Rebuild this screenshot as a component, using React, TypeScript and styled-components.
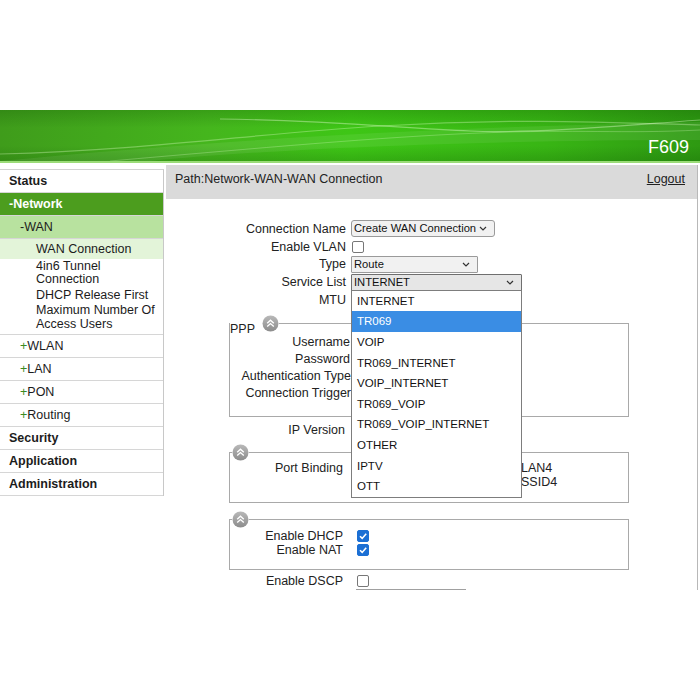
import React from 'react'
import styled, {createGlobalStyle} from 'styled-components'

const GlobalStyle = createGlobalStyle`
  html, body {
    margin: 0;
    padding: 0;
    background: #fff;
  }
  body {
    font-family: "Liberation Sans", Arial, sans-serif;
    font-size: 12.5px;
    color: #222;
  }
`

const Page = styled.div`
  width: 700px;
  height: 590px;
  overflow: hidden;
  padding-top: 110px;
  box-sizing: border-box;
`

/* ---------- banner ---------- */

const Banner = styled.div`
  height: 51px;
  display: grid;
  border-bottom: 2px solid #9bdc78;
  & > * {
    grid-area: 1 / 1;
  }
`

const BannerArt = styled.svg`
  width: 100%;
  height: 100%;
  display: block;
`

const ModelName = styled.div`
  align-self: end;
  justify-self: end;
  padding: 0 11px 5px 0;
  color: #fff;
  font-size: 18px;
  line-height: 18px;
`

/* ---------- body ---------- */

const Body = styled.div`
  display: flex;
  align-items: flex-start;
  margin-top: 2px;
  height: 440px;
`

const Sidebar = styled.ul`
  list-style: none;
  margin: 4px 0 0;
  padding: 0;
  width: 164px;
  box-sizing: border-box;
  border-top: 1px solid #d2d2d2;
  border-right: 1px solid #c8c8c8;
  flex-shrink: 0;
`

type Tone = 'plain' | 'dark' | 'mid' | 'light'

const toneBg: Record<Tone, string> = {
  plain: '#fff',
  dark: '#4c9d1e',
  mid: '#b8e29f',
  light: '#e3f4d9',
}

const NavRow = styled.li<{$tone?: Tone; $indent: number; $bold?: boolean}>`
  height: 22px;
  line-height: 22px;
  border-bottom: 1px solid #d6d6d6;
  padding-left: ${(p) => p.$indent}px;
  background: ${(p) => toneBg[p.$tone ?? 'plain']};
  color: ${(p) => (p.$tone === 'dark' ? '#fff' : '#1c1c1c')};
  font-weight: ${(p) => (p.$bold ? 'bold' : 'normal')};
  white-space: nowrap;
`

const Plus = styled.span`
  color: #3a8a20;
`

const LeafGroup = styled.li`
  border-bottom: 1px solid #d6d6d6;
  padding-bottom: 1.5px;
`

const Leaf = styled.div<{$active?: boolean}>`
  padding: ${(p) => (p.$active ? '3.5px' : '1px')} 8px
    ${(p) => (p.$active ? '2.5px' : '1px')} 36px;
  line-height: 13.5px;
  background: ${(p) => (p.$active ? toneBg.light : 'transparent')};
  color: #1c1c1c;
`

const Main = styled.div`
  flex: 1;
  margin: 0 2px 0 2px;
  align-self: stretch;
  border-right: 1px solid #b8b8b8;
`

const PathBar = styled.div`
  height: 34px;
  box-sizing: border-box;
  background: #dadada;
  display: flex;
  justify-content: space-between;
  align-items: flex-start;
  padding: 7px 12px 0 9px;
  line-height: 15px;
`

const Logout = styled.a`
  color: #222;
  text-decoration: underline;
`

const Form = styled.div`
  padding-top: 21px;
`

const Row = styled.div<{$h: number; $top?: number; $align?: string}>`
  display: flex;
  align-items: ${(p) => p.$align ?? 'center'};
  height: ${(p) => p.$h}px;
  margin-top: ${(p) => p.$top ?? 0}px;
`

const Label = styled.div<{$w: number; $gap?: number}>`
  width: ${(p) => p.$w}px;
  margin-right: ${(p) => p.$gap ?? 5}px;
  text-align: right;
  white-space: nowrap;
  flex-shrink: 0;
  line-height: 14px;
`

const SelectBox = styled.div<{$w: number; $round?: boolean; $active?: boolean}>`
  width: ${(p) => p.$w}px;
  height: 17px;
  box-sizing: border-box;
  border: 1px solid ${(p) => (p.$active ? '#6f6f6f' : '#9a9a9a')};
  border-radius: ${(p) => (p.$round ? 3 : 1)}px;
  background: ${(p) => (p.$active ? '#e6e6e6' : '#f1f1f1')};
  display: flex;
  align-items: center;
  justify-content: space-between;
  padding: 0 7px 0 2px;
  font-size: 11.2px;
  line-height: 15px;
  white-space: nowrap;
  color: #111;
  position: relative;
`

const Box = styled.span<{$checked?: boolean; $left?: number}>`
  display: inline-flex;
  align-items: center;
  justify-content: center;
  width: 12px;
  height: 12px;
  box-sizing: border-box;
  margin-left: ${(p) => p.$left ?? 1}px;
  border: 1px solid ${(p) => (p.$checked ? '#1b6fd4' : '#777')};
  border-radius: 2px;
  background: ${(p) => (p.$checked ? '#1b6fd4' : '#fff')};
  flex-shrink: 0;
`

const Field = styled.fieldset<{$top: number; $bottom?: number}>`
  margin: ${(p) => p.$top}px 0 0 63px;
  width: 400px;
  box-sizing: border-box;
  border: 1px solid #a9a9a9;
  padding: 0 0 ${(p) => p.$bottom ?? 13}px 0;
  min-width: 0;
`

const Legend = styled.legend<{$left?: number}>`
  padding: 0;
  margin-left: ${(p) => p.$left ?? 0}px;
  display: flex;
  align-items: flex-end;
  height: 17px;
`

const LegendText = styled.span`
  line-height: 12px;
  margin-bottom: -3px;
  margin-right: 7px;
`

const Options = styled.ul`
  position: absolute;
  top: 100%;
  left: -1px;
  width: 171px;
  box-sizing: border-box;
  margin: 0;
  padding: 0;
  list-style: none;
  background: #fff;
  border: 1px solid #7d7d7d;
  z-index: 5;
  font-size: 11.5px;
`

const Option = styled.li<{$hover?: boolean}>`
  height: 20.6px;
  line-height: 21px;
  padding-left: 5px;
  background: ${(p) => (p.$hover ? '#3a8de4' : 'transparent')};
  color: ${(p) => (p.$hover ? '#fff' : '#111')};
`

const Ports = styled.div`
  display: flex;
  flex-direction: column;
  line-height: 14px;
`

const PortLine = styled.div`
  display: flex;
`

const Port = styled.span`
  display: inline-flex;
  align-items: center;
  width: 52px;
  gap: 1px;
`

const TextInput = styled.div<{$w: number; $left?: number}>`
  width: ${(p) => p.$w}px;
  height: 17px;
  box-sizing: border-box;
  border: 1px solid #a0a0a0;
  margin-left: ${(p) => p.$left ?? 0}px;
  background: #fff;
`

/* ---------- drawings ---------- */

const Chevron = () => (
  <svg width="8" height="5" viewBox="0 0 8 5">
    <path d="M1 1 L4 4 L7 1" fill="none" stroke="#333" strokeWidth="1.2" />
  </svg>
)

const Check = () => (
  <svg width="10" height="10" viewBox="0 0 10 10">
    <path
      d="M2 5.2 L4.2 7.4 L8.2 2.8"
      fill="none"
      stroke="#fff"
      strokeWidth="1.6"
    />
  </svg>
)

const CollapseIcon = () => (
  <svg width="17" height="17" viewBox="0 0 17 17">
    <defs>
      <linearGradient id="cg" x1="0" y1="0" x2="0" y2="1">
        <stop offset="0" stopColor="#b9b9b9" />
        <stop offset="1" stopColor="#8c8c8c" />
      </linearGradient>
    </defs>
    <circle cx="8.5" cy="8.5" r="8" fill="url(#cg)" />
    <path
      d="M5.2 8.2 L8.5 5.2 L11.8 8.2 M5.2 11.6 L8.5 8.6 L11.8 11.6"
      fill="none"
      stroke="#fff"
      strokeWidth="1.4"
    />
  </svg>
)

const Waves = () => (
  <BannerArt viewBox="0 0 700 51" preserveAspectRatio="none">
    <defs>
      <linearGradient id="bh" x1="0" y1="0" x2="1" y2="0">
        <stop offset="0" stopColor="#3f9c1b" />
        <stop offset="0.3" stopColor="#45b61d" />
        <stop offset="0.5" stopColor="#3ec616" />
        <stop offset="0.78" stopColor="#38b514" />
        <stop offset="1" stopColor="#2e9912" />
      </linearGradient>
      <linearGradient id="bv" x1="0" y1="0" x2="0" y2="1">
        <stop offset="0" stopColor="#0a4a00" stopOpacity="0.22" />
        <stop offset="0.35" stopColor="#0a4a00" stopOpacity="0" />
        <stop offset="0.7" stopColor="#0a4a00" stopOpacity="0" />
        <stop offset="1" stopColor="#0a4a00" stopOpacity="0.2" />
      </linearGradient>
    </defs>
    <rect width="700" height="51" fill="url(#bh)" />
    <rect width="700" height="51" fill="url(#bv)" />
    <path
      d="M0 51 C 200 32, 400 18, 700 12 L700 30 C 460 30, 260 40, 150 51 Z"
      fill="#ffffff"
      opacity="0.07"
    />
    <path
      d="M0 44 C 150 40, 250 24, 380 16 S 600 12, 700 15"
      fill="none"
      stroke="#dfffc8"
      strokeOpacity="0.35"
      strokeWidth="1.2"
    />
    <path
      d="M110 51 C 260 38, 380 27, 480 23 S 620 24, 700 20"
      fill="none"
      stroke="#dfffc8"
      strokeOpacity="0.28"
      strokeWidth="1"
    />
    <path
      d="M220 9 C 320 10, 400 18, 470 21 S 640 14, 700 10"
      fill="none"
      stroke="#e8ffd8"
      strokeOpacity="0.4"
      strokeWidth="1.2"
    />
  </BannerArt>
)

const services = [
  'INTERNET',
  'TR069',
  'VOIP',
  'TR069_INTERNET',
  'VOIP_INTERNET',
  'TR069_VOIP',
  'TR069_VOIP_INTERNET',
  'OTHER',
  'IPTV',
  'OTT',
]

const App: React.FC = () => {
  return (
    <Page>
      <GlobalStyle />
      <Banner>
        <Waves />
        <ModelName>F609</ModelName>
      </Banner>

      <Body>
        <Sidebar>
          <NavRow $indent={9} $bold>
            Status
          </NavRow>
          <NavRow $indent={9} $bold $tone="dark">
            -Network
          </NavRow>
          <NavRow $indent={20} $tone="mid">
            -WAN
          </NavRow>
          <LeafGroup>
            <Leaf $active>WAN Connection</Leaf>
            <Leaf>
              4in6 Tunnel
              <br />
              Connection
            </Leaf>
            <Leaf>DHCP Release First</Leaf>
            <Leaf>
              Maximum Number Of
              <br />
              Access Users
            </Leaf>
          </LeafGroup>
          {['WLAN', 'LAN', 'PON', 'Routing'].map((name) => (
            <NavRow key={name} $indent={20}>
              <Plus>+</Plus>
              {name}
            </NavRow>
          ))}
          <NavRow $indent={9} $bold>
            Security
          </NavRow>
          <NavRow $indent={9} $bold>
            Application
          </NavRow>
          <NavRow $indent={9} $bold>
            Administration
          </NavRow>
        </Sidebar>

        <Main>
          <PathBar>
            <span>Path:Network-WAN-WAN Connection</span>
            <Logout>Logout</Logout>
          </PathBar>

          <Form>
            <Row $h={17.8}>
              <Label $w={180}>Connection Name</Label>
              <SelectBox $w={144} $round>
                <span>Create WAN Connection</span>
                <Chevron />
              </SelectBox>
            </Row>
            <Row $h={17.8}>
              <Label $w={180}>Enable VLAN</Label>
              <Box />
            </Row>
            <Row $h={17.8}>
              <Label $w={180}>Type</Label>
              <SelectBox $w={127}>
                <span>Route</span>
                <Chevron />
              </SelectBox>
            </Row>
            <Row $h={17.8}>
              <Label $w={180}>Service List</Label>
              <SelectBox $w={171} $active>
                <span>INTERNET</span>
                <Chevron />
                <Options>
                  {services.map((s) => (
                    <Option key={s} $hover={s === 'TR069'}>
                      {s}
                    </Option>
                  ))}
                </Options>
              </SelectBox>
            </Row>
            <Row $h={17.8}>
              <Label $w={180}>MTU</Label>
              <TextInput $w={150} />
            </Row>

            <Field $top={6} $bottom={14}>
              <Legend>
                <LegendText>PPP</LegendText>
                <CollapseIcon />
              </Legend>
              <Row $h={17} $top={2}>
                <Label $w={120}>Username</Label>
              </Row>
              <Row $h={17}>
                <Label $w={120}>Password</Label>
              </Row>
              <Row $h={17}>
                <Label $w={121}>Authentication Type</Label>
              </Row>
              <Row $h={17}>
                <Label $w={121}>Connection Trigger</Label>
              </Row>
            </Field>

            <Row $h={18} $top={4}>
              <Label $w={179}>IP Version</Label>
            </Row>

            <Field $top={5}>
              <Legend $left={2}>
                <CollapseIcon />
              </Legend>
              <Row $h={28} $align="flex-start">
                <Label $w={113} $gap={9}>
                  Port Binding
                </Label>
                <Ports>
                  <PortLine>
                    {['LAN1', 'LAN2', 'LAN3', 'LAN4'].map((p) => (
                      <Port key={p}>
                        <Box $left={0} />
                        {p}
                      </Port>
                    ))}
                  </PortLine>
                  <PortLine>
                    {['SSID1', 'SSID2', 'SSID3', 'SSID4'].map((p) => (
                      <Port key={p}>
                        <Box $left={0} />
                        {p}
                      </Port>
                    ))}
                  </PortLine>
                </Ports>
              </Row>
            </Field>

            <Field $top={8}>
              <Legend $left={2}>
                <CollapseIcon />
              </Legend>
              <Row $h={13.5} $top={1.5}>
                <Label $w={113} $gap={14}>
                  Enable DHCP
                </Label>
                <Box $checked $left={0}>
                  <Check />
                </Box>
              </Row>
              <Row $h={13.5}>
                <Label $w={113} $gap={14}>
                  Enable NAT
                </Label>
                <Box $checked $left={0}>
                  <Check />
                </Box>
              </Row>
            </Field>

            <Row $h={16} $top={3}>
              <Label $w={177} $gap={14}>
                Enable DSCP
              </Label>
              <Box $left={0} />
            </Row>
            <TextInput $w={110} $left={190} />
          </Form>
        </Main>
      </Body>
    </Page>
  )
}

export default App
